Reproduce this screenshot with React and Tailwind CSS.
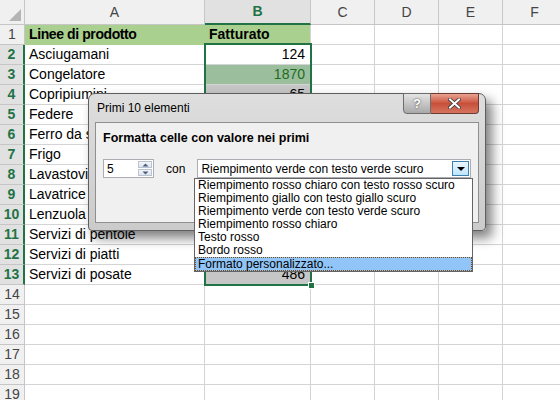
import React from "react";

const rows = [
  ["Linee di prodotto", "Fatturato"],
  ["Asciugamani", "124"],
  ["Congelatore", "1870"],
  ["Copripiumini", "65"],
  ["Federe", "340"],
  ["Ferro da stiro", "910"],
  ["Frigo", "1240"],
  ["Lavastoviglie", "780"],
  ["Lavatrice", "1420"],
  ["Lenzuola", "230"],
  ["Servizi di pentole", "560"],
  ["Servizi di piatti", "670"],
  ["Servizi di posate", "486"],
  ["", ""],
  ["", ""],
  ["", ""],
  ["", ""],
  ["", ""],
  ["", ""],
];

const options = [
  "Riempimento rosso chiaro con testo rosso scuro",
  "Riempimento giallo con testo giallo scuro",
  "Riempimento verde con testo verde scuro",
  "Riempimento rosso chiaro",
  "Testo rosso",
  "Bordo rosso",
  "Formato personalizzato...",
];

const extraCols = ["C", "D", "E", "F"];

function HeaderRow() {
  return (
    <div className="flex h-[25px] bg-[#f0f0f0] text-[14px] text-[#444]">
      <div className="flex w-[25px] shrink-0 items-end justify-end border-r border-b border-[#c6c6c6] pr-[3px] pb-[3px]">
        <svg width="12" height="12" viewBox="0 0 12 12">
          <path d="M12 0 L12 12 L0 12 Z" fill="#b4b4b4" />
        </svg>
      </div>
      <div className="flex w-[180px] shrink-0 items-center justify-center border-r border-b border-[#c6c6c6]">A</div>
      <div className="flex w-[106px] shrink-0 items-center justify-center border-r border-[#c6c6c6] border-b-2 border-b-[#217346] bg-[#e1e1e1] font-bold text-[#217346]">
        B
      </div>
      {extraCols.map((c) => (
        <div key={c} className="flex w-[64px] shrink-0 items-center justify-center border-r border-b border-[#c6c6c6]">
          {c}
        </div>
      ))}
    </div>
  );
}

function SheetRow({ n, a, b }) {
  const selected = n >= 2 && n <= 13;
  let bCls = "bg-white text-black";
  if (n === 1) bCls = "bg-[#a9d08e] font-bold text-black justify-start pl-[4px]";
  else if (n === 3) bCls = "bg-[#9bbf9d] text-[#1d6b1d] justify-end pr-[5px]";
  else if (n === 2) bCls = "bg-white text-black justify-end pr-[5px]";
  else if (selected) bCls = "bg-[#c6c6c6] text-black justify-end pr-[5px]";
  return (
    <div className="flex h-[20px] text-[14px]">
      <div
        className={
          "flex w-[25px] shrink-0 items-center justify-center border-b border-[#c6c6c6] " +
          (selected
            ? "border-r-2 border-r-[#217346] bg-[#e1e1e1] font-bold text-[#217346]"
            : "border-r border-r-[#c6c6c6] bg-[#f0f0f0] text-[#444]")
        }
      >
        {n}
      </div>
      <div
        className={
          "flex w-[180px] shrink-0 items-center overflow-visible whitespace-nowrap border-b border-r pl-[4px] " +
          (n === 1 ? "bg-[#a9d08e] font-bold tracking-[-0.4px] border-[#a9d08e]" : "border-[#d4d4d4]")
        }
      >
        {a}
      </div>
      <div className={"flex w-[106px] shrink-0 items-center border-b border-r border-[#d4d4d4] " + bCls}>
        {b}
      </div>
      {extraCols.map((c) => (
        <div key={c} className="w-[64px] shrink-0 border-b border-r border-[#d4d4d4]" />
      ))}
    </div>
  );
}

function Dialog() {
  return (
    <div className="absolute left-[88px] top-[93px] h-[138px] w-[398px] rounded-t-[7px] rounded-b-[4px] border border-[#5e5e5e] bg-gradient-to-b from-[#dedede] to-[#cbcbcb] shadow-[6px_7px_12px_rgba(0,0,0,0.5)]">
      <div className="flex h-[28px] items-center pl-[8px] text-[12px] text-black">Primi 10 elementi</div>
      <div className="absolute right-[6px] top-[-1px] flex h-[21px]">
        <div className="flex w-[28px] items-center justify-center rounded-bl-[4px] border border-[#6d6d6d] bg-gradient-to-b from-[#e4e4e4] to-[#a9a9a9] text-[13px] font-bold text-white [text-shadow:0_0_2px_#333]">
          ?
        </div>
        <div className="flex w-[48px] items-center justify-center rounded-br-[4px] border border-l-0 border-[#6d3a30] bg-gradient-to-b from-[#e8a393] via-[#c8503a] to-[#d5735f]">
          <svg width="13" height="11" viewBox="0 0 13 11">
            <path d="M2 1.5 L11 9.5 M11 1.5 L2 9.5" stroke="#3a3a3a" strokeWidth="3.6" strokeLinecap="square" />
            <path d="M2 1.5 L11 9.5 M11 1.5 L2 9.5" stroke="#ffffff" strokeWidth="2" strokeLinecap="square" />
          </svg>
        </div>
      </div>
      <div className="mx-[6px] h-[101px] border border-[#8f8f8f] bg-[#f0f0f0] px-[7px] pt-[8px]">
        <div className="text-[12.5px] font-bold leading-[15px] text-black">Formatta celle con valore nei primi</div>
        <div className="mt-[13px] flex items-center">
          <div className="flex h-[19px] w-[52px] items-center justify-between border border-[#abadb3] bg-white pl-[3px] pr-[1px] text-[12px]">
            <span>5</span>
            <div className="flex flex-col gap-[1px]">
              <div className="flex h-[7px] w-[14px] items-center justify-center border border-[#b9c4d2] bg-gradient-to-b from-[#f4f6f9] to-[#dfe5ee]">
                <svg width="7" height="4" viewBox="0 0 7 4"><path d="M0.5 3.5 L3.5 0.5 L6.5 3.5 Z" fill="#4a5d7a" /></svg>
              </div>
              <div className="flex h-[7px] w-[14px] items-center justify-center border border-[#b9c4d2] bg-gradient-to-b from-[#f4f6f9] to-[#dfe5ee]">
                <svg width="7" height="4" viewBox="0 0 7 4"><path d="M0.5 0.5 L3.5 3.5 L6.5 0.5 Z" fill="#4a5d7a" /></svg>
              </div>
            </div>
          </div>
          <span className="ml-[12px] text-[12px]">con</span>
          <div className="ml-[12px] flex h-[19px] w-[279px] items-center justify-between whitespace-nowrap border border-[#abadb3] bg-white pl-[3px] pr-[1px] text-[12px]">
            <span>Riempimento verde con testo verde scuro</span>
            <div className="flex h-[15px] w-[17px] items-center justify-center border border-[#3c7fb1] bg-gradient-to-b from-[#eaf6fd] to-[#bee6fd]">
              <svg width="8" height="4" viewBox="0 0 8 4"><path d="M0 0 L8 0 L4 4 Z" fill="#000" /></svg>
            </div>
          </div>
        </div>
      </div>
    </div>
  );
}

function DropList() {
  return (
    <div className="absolute left-[194px] top-[178px] w-[279px] whitespace-nowrap border border-[#646464] bg-white text-[12px] leading-[13px] text-black">
      {options.map((o, i) =>
        i === options.length - 1 ? (
          <div key={o} className="h-[14px] border border-dotted border-[#7a4b12] bg-[#91c5f7] pl-[2px] leading-[12px]">
            {o}
          </div>
        ) : (
          <div key={o} className="h-[13px] pl-[3px]">
            {o}
          </div>
        )
      )}
    </div>
  );
}

export default function App() {
  return (
    <div
      className="relative h-[400px] w-[560px] overflow-hidden bg-white"
      style={{ fontFamily: '"Liberation Sans", Arial, sans-serif' }}
    >
      <HeaderRow />
      {rows.map((r, i) => (
        <SheetRow key={i} n={i + 1} a={r[0]} b={r[1]} />
      ))}
      <div className="absolute left-[204px] top-[43px] h-[243px] w-[108px] border-2 border-[#217346]" />
      <div className="absolute left-[308px] top-[282px] h-[7px] w-[7px] border border-white bg-[#217346]" />
      <Dialog />
      <DropList />
    </div>
  );
}
